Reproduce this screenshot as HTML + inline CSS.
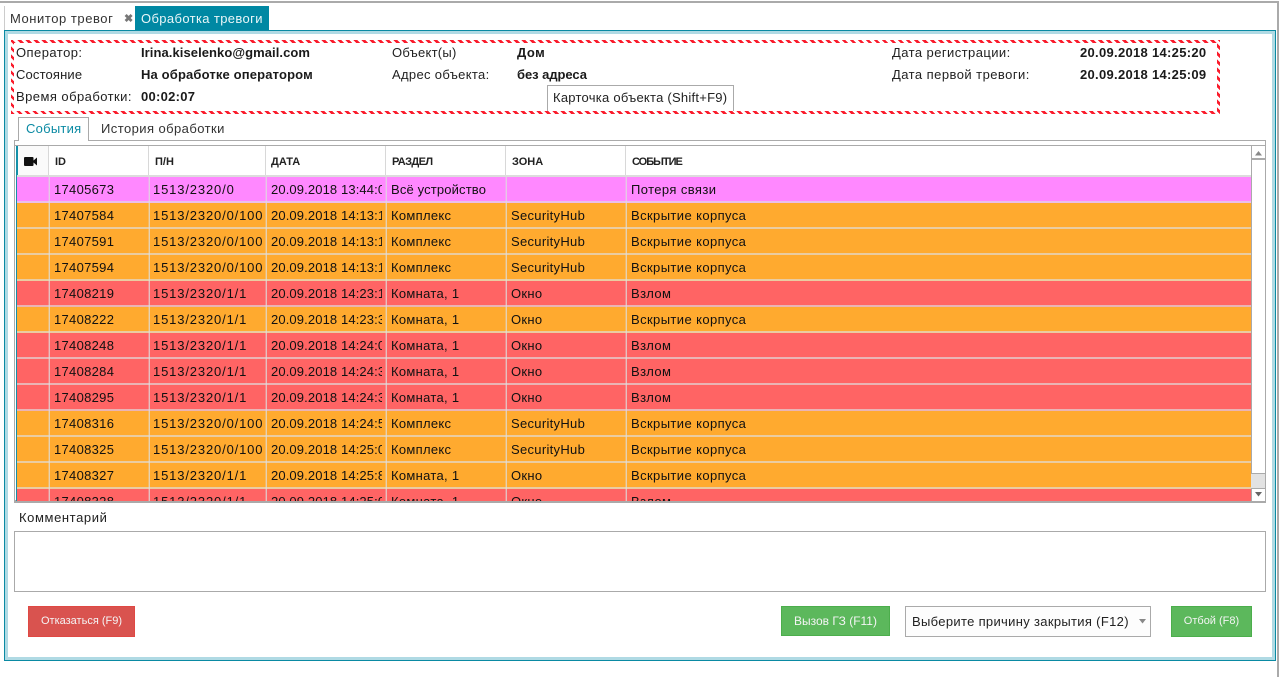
<!DOCTYPE html>
<html lang="ru"><head><meta charset="utf-8"><title>Обработка тревоги</title>
<style>
html,body{margin:0;padding:0;background:#fff}
#p{position:relative;width:1279px;height:677px;overflow:hidden;background:#fff;font:13px/18px "Liberation Sans",sans-serif;color:#222}
#p div,#p span{position:absolute;white-space:nowrap}
.b{font-weight:bold;color:#1a1a1a;letter-spacing:.15px}
.l{letter-spacing:.25px}
.row{left:17px;width:1234px;height:24px;border-bottom:2px solid rgba(222,222,222,.65)}
.row span{top:4px;line-height:18px;color:#111;letter-spacing:.3px;overflow:hidden}
.s{top:0;width:2px;height:26px;background:linear-gradient(90deg,rgba(222,222,222,.3) 50%,rgba(222,222,222,.75) 50%)}
.o{background:#ffaa2f}.r{background:#ff6464}.m{background:#ff88ff}
.c1{left:37px;width:90px}.row .c2{left:136px;width:112px;letter-spacing:.85px}.row .c3{left:254px;width:111px;letter-spacing:.12px}.c4{left:374px;width:112px}.c5{left:494px;width:112px}.row .c6{left:614px;width:400px;letter-spacing:.4px}
.h{top:153px;font:bold 11px/18px "Liberation Sans",sans-serif;color:#222}
.v{top:146px;width:1px;height:30px;background:#d8d8d8}
.btn{color:#f4f4f4;font-size:11px;text-align:center;box-sizing:border-box}
</style></head><body><div id="p">
<div style="left:0;top:1px;width:1279px;height:2px;background:#aaa"></div>
<div style="left:1277px;top:1px;width:2px;height:676px;background:#aaa"></div>
<div style="left:4px;top:6px;width:131px;height:25px;border-left:1px solid #ccc;box-sizing:border-box"></div>
<div class="l" style="left:10px;top:10px;font-size:13px;color:#333;letter-spacing:.55px">Монитор тревог</div>
<div style="left:124px;top:10px;font-size:11px;font-weight:bold;color:#777">✖</div>
<div style="left:135px;top:6px;width:134px;height:25px;background:#0088a3"></div>
<div class="l" style="left:141px;top:10px;color:#e8f6f8;letter-spacing:.37px">Обработка тревоги</div>

<div style="left:4px;top:30px;width:1272px;height:631px;box-sizing:border-box;border:1px solid #0a8aa3"></div>
<div style="left:5px;top:31px;width:1270px;height:629px;box-sizing:border-box;border:3px solid #b0dae4;background:#fff"></div>

<div style="left:11px;top:40px;width:1209px;height:74px;background:repeating-linear-gradient(45deg,#fa1c2c 0 2.8px,#fff 2.8px 5.66px)"></div>
<div style="left:14px;top:43px;width:1203px;height:68px;background:#fff"></div>

<div class="l" style="left:16px;top:44px;letter-spacing:.45px">Оператор:</div>
<div class="l" style="left:16px;top:66px;letter-spacing:.15px">Состояние</div>
<div class="l" style="left:16px;top:88px;letter-spacing:.45px">Время обработки:</div>
<div class="b" style="left:141px;top:44px;letter-spacing:.07px">Irina.kiselenko@gmail.com</div>
<div class="b" style="left:141px;top:66px">На обработке оператором</div>
<div class="b" style="left:141px;top:88px;letter-spacing:.27px">00:02:07</div>
<div class="l" style="left:392px;top:44px">Объект(ы)</div>
<div class="l" style="left:392px;top:66px;letter-spacing:.33px">Адрес объекта:</div>
<div class="b" style="left:517px;top:44px;letter-spacing:.45px">Дом</div>
<div class="b" style="left:517px;top:66px;letter-spacing:-.05px">без адреса</div>
<div class="l" style="left:892px;top:44px;letter-spacing:.43px">Дата регистрации:</div>
<div class="l" style="left:892px;top:66px;letter-spacing:.45px">Дата первой тревоги:</div>
<div class="b" style="left:1080px;top:44px;letter-spacing:.3px">20.09.2018 14:25:20</div>
<div class="b" style="left:1080px;top:66px;letter-spacing:.3px">20.09.2018 14:25:09</div>
<div class="l" style="left:547px;top:85px;width:187px;height:26px;box-sizing:border-box;border:1px solid #aaa;border-bottom:0;background:#fff;padding:3px 0 0 5px">Карточка объекта (Shift+F9)</div>

<div style="left:14px;top:140px;width:1252px;height:363px;box-sizing:border-box;border:1px solid #aaa;border-bottom:3px solid #aaa"></div>
<div style="left:15px;top:145px;width:1250px;height:1px;background:#aaa"></div>
<div style="left:18px;top:117px;width:71px;height:24px;box-sizing:border-box;border:1px solid #aaa;border-bottom:0;background:#fff"></div>
<div class="l" style="left:26px;top:120px;color:#0a8aa3">События</div>
<div class="l" style="left:101px;top:120px;color:#333;letter-spacing:.43px">История обработки</div>

<div style="left:16px;top:146px;width:2px;height:355px;background:#1490a8"></div>
<div style="left:18px;top:146px;width:30px;height:30px;background:#fafafa"></div>
<svg style="position:absolute;left:24px;top:157px" width="13" height="9" viewBox="0 0 13 9"><rect x="0" y="0" width="9.5" height="9" rx="1" fill="#111"/><path d="M9.5 3.5 13 0.5V8.5L9.5 5.5Z" fill="#111"/></svg>
<div class="v" style="left:48px"></div><div class="v" style="left:148px"></div><div class="v" style="left:265px"></div><div class="v" style="left:385px"></div><div class="v" style="left:505px"></div><div class="v" style="left:625px"></div>
<div class="h" style="left:55px">ID</div><div class="h" style="left:155px">П/Н</div><div class="h" style="left:271px">ДАТА</div><div class="h" style="left:392px;letter-spacing:-.6px">РАЗДЕЛ</div><div class="h" style="left:512px">ЗОНА</div><div class="h" style="left:632px;letter-spacing:-1px">СОБЫТИЕ</div>
<div style="left:17px;top:175px;width:1234px;height:2px;background:#dcdcdc"></div>

<div class="row m" style="top:177px"><div class="s" style="left:31px"></div><div class="s" style="left:131px"></div><div class="s" style="left:248px"></div><div class="s" style="left:368px"></div><div class="s" style="left:488px"></div><div class="s" style="left:608px"></div><span class="c1">17405673</span><span class="c2">1513/2320/0</span><span class="c3">20.09.2018 13:44:07</span><span class="c4" style="letter-spacing:.15px">Всё устройство</span><span class="c6">Потеря связи</span></div>
<div class="row o" style="top:203px"><div class="s" style="left:31px"></div><div class="s" style="left:131px"></div><div class="s" style="left:248px"></div><div class="s" style="left:368px"></div><div class="s" style="left:488px"></div><div class="s" style="left:608px"></div><span class="c1">17407584</span><span class="c2">1513/2320/0/100</span><span class="c3">20.09.2018 14:13:11</span><span class="c4">Комплекс</span><span class="c5">SecurityHub</span><span class="c6">Вскрытие корпуса</span></div>
<div class="row o" style="top:229px"><div class="s" style="left:31px"></div><div class="s" style="left:131px"></div><div class="s" style="left:248px"></div><div class="s" style="left:368px"></div><div class="s" style="left:488px"></div><div class="s" style="left:608px"></div><span class="c1">17407591</span><span class="c2">1513/2320/0/100</span><span class="c3">20.09.2018 14:13:12</span><span class="c4">Комплекс</span><span class="c5">SecurityHub</span><span class="c6">Вскрытие корпуса</span></div>
<div class="row o" style="top:255px"><div class="s" style="left:31px"></div><div class="s" style="left:131px"></div><div class="s" style="left:248px"></div><div class="s" style="left:368px"></div><div class="s" style="left:488px"></div><div class="s" style="left:608px"></div><span class="c1">17407594</span><span class="c2">1513/2320/0/100</span><span class="c3">20.09.2018 14:13:13</span><span class="c4">Комплекс</span><span class="c5">SecurityHub</span><span class="c6">Вскрытие корпуса</span></div>
<div class="row r" style="top:281px"><div class="s" style="left:31px"></div><div class="s" style="left:131px"></div><div class="s" style="left:248px"></div><div class="s" style="left:368px"></div><div class="s" style="left:488px"></div><div class="s" style="left:608px"></div><span class="c1">17408219</span><span class="c2">1513/2320/1/1</span><span class="c3">20.09.2018 14:23:11</span><span class="c4">Комната, 1</span><span class="c5">Окно</span><span class="c6">Взлом</span></div>
<div class="row o" style="top:307px"><div class="s" style="left:31px"></div><div class="s" style="left:131px"></div><div class="s" style="left:248px"></div><div class="s" style="left:368px"></div><div class="s" style="left:488px"></div><div class="s" style="left:608px"></div><span class="c1">17408222</span><span class="c2">1513/2320/1/1</span><span class="c3">20.09.2018 14:23:31</span><span class="c4">Комната, 1</span><span class="c5">Окно</span><span class="c6">Вскрытие корпуса</span></div>
<div class="row r" style="top:333px"><div class="s" style="left:31px"></div><div class="s" style="left:131px"></div><div class="s" style="left:248px"></div><div class="s" style="left:368px"></div><div class="s" style="left:488px"></div><div class="s" style="left:608px"></div><span class="c1">17408248</span><span class="c2">1513/2320/1/1</span><span class="c3">20.09.2018 14:24:01</span><span class="c4">Комната, 1</span><span class="c5">Окно</span><span class="c6">Взлом</span></div>
<div class="row r" style="top:359px"><div class="s" style="left:31px"></div><div class="s" style="left:131px"></div><div class="s" style="left:248px"></div><div class="s" style="left:368px"></div><div class="s" style="left:488px"></div><div class="s" style="left:608px"></div><span class="c1">17408284</span><span class="c2">1513/2320/1/1</span><span class="c3">20.09.2018 14:24:31</span><span class="c4">Комната, 1</span><span class="c5">Окно</span><span class="c6">Взлом</span></div>
<div class="row r" style="top:385px"><div class="s" style="left:31px"></div><div class="s" style="left:131px"></div><div class="s" style="left:248px"></div><div class="s" style="left:368px"></div><div class="s" style="left:488px"></div><div class="s" style="left:608px"></div><span class="c1">17408295</span><span class="c2">1513/2320/1/1</span><span class="c3">20.09.2018 14:24:31</span><span class="c4">Комната, 1</span><span class="c5">Окно</span><span class="c6">Взлом</span></div>
<div class="row o" style="top:411px"><div class="s" style="left:31px"></div><div class="s" style="left:131px"></div><div class="s" style="left:248px"></div><div class="s" style="left:368px"></div><div class="s" style="left:488px"></div><div class="s" style="left:608px"></div><span class="c1">17408316</span><span class="c2">1513/2320/0/100</span><span class="c3">20.09.2018 14:24:51</span><span class="c4">Комплекс</span><span class="c5">SecurityHub</span><span class="c6">Вскрытие корпуса</span></div>
<div class="row o" style="top:437px"><div class="s" style="left:31px"></div><div class="s" style="left:131px"></div><div class="s" style="left:248px"></div><div class="s" style="left:368px"></div><div class="s" style="left:488px"></div><div class="s" style="left:608px"></div><span class="c1">17408325</span><span class="c2">1513/2320/0/100</span><span class="c3">20.09.2018 14:25:01</span><span class="c4">Комплекс</span><span class="c5">SecurityHub</span><span class="c6">Вскрытие корпуса</span></div>
<div class="row o" style="top:463px"><div class="s" style="left:31px"></div><div class="s" style="left:131px"></div><div class="s" style="left:248px"></div><div class="s" style="left:368px"></div><div class="s" style="left:488px"></div><div class="s" style="left:608px"></div><span class="c1">17408327</span><span class="c2">1513/2320/1/1</span><span class="c3">20.09.2018 14:25:81</span><span class="c4">Комната, 1</span><span class="c5">Окно</span><span class="c6">Вскрытие корпуса</span></div>
<div class="row r" style="top:489px;height:12px;border:0;overflow:hidden"><div class="s" style="left:31px"></div><div class="s" style="left:131px"></div><div class="s" style="left:248px"></div><div class="s" style="left:368px"></div><div class="s" style="left:488px"></div><div class="s" style="left:608px"></div><span class="c1">17408328</span><span class="c2">1513/2320/1/1</span><span class="c3">20.09.2018 14:25:01</span><span class="c4">Комната, 1</span><span class="c5">Окно</span><span class="c6">Взлом</span></div>

<div style="left:1251px;top:146px;width:14px;height:355px;background:#e2e2e2"></div>
<div style="left:1251px;top:146px;width:14px;height:14px;box-sizing:border-box;background:#fff;border:1px solid #aaa;border-width:0 0 2px 1px"></div>
<div style="left:1251px;top:160px;width:14px;height:314px;box-sizing:border-box;background:#fff;border:1px solid #aaa;border-width:0 0 1px 1px"></div>
<div style="left:1251px;top:488px;width:14px;height:13px;box-sizing:border-box;background:#fff;border-left:1px solid #aaa;border-top:1px solid #aaa"></div>
<svg style="position:absolute;left:1255px;top:151px" width="7" height="5"><path d="M3.5 0 7 4.5H0Z" fill="#888"/></svg>
<svg style="position:absolute;left:1255px;top:492px" width="7" height="5"><path d="M0 0H7L3.5 4.5Z" fill="#666"/></svg>

<div class="l" style="left:19px;top:509px;letter-spacing:.6px">Комментарий</div>
<div style="left:14px;top:531px;width:1252px;height:61px;box-sizing:border-box;border:1px solid #aaa;background:#fff"></div>

<div class="btn" style="left:28px;top:606px;width:107px;height:31px;line-height:29px;background:#d9534f;border:1px solid #e04843">Отказаться (F9)</div>
<div class="btn" style="left:781px;top:606px;width:109px;height:30px;line-height:29px;background:#5cb85c;border:1px solid #4cae4c;font-size:12px">Вызов ГЗ (F11)</div>
<div class="l" style="left:905px;top:606px;width:246px;height:31px;box-sizing:border-box;border:1px solid #aaa;background:#fdfdfd;line-height:29px;padding-left:6px;color:#222;letter-spacing:.32px">Выберите причину закрытия (F12)</div>
<svg style="position:absolute;left:1139px;top:619px" width="7" height="5"><path d="M0 0H7L3.5 4.5Z" fill="#888"/></svg>
<div class="btn" style="left:1171px;top:606px;width:81px;height:31px;line-height:28px;background:#5cb85c;border:1px solid #4cae4c">Отбой (F8)</div>
</div></body></html>
